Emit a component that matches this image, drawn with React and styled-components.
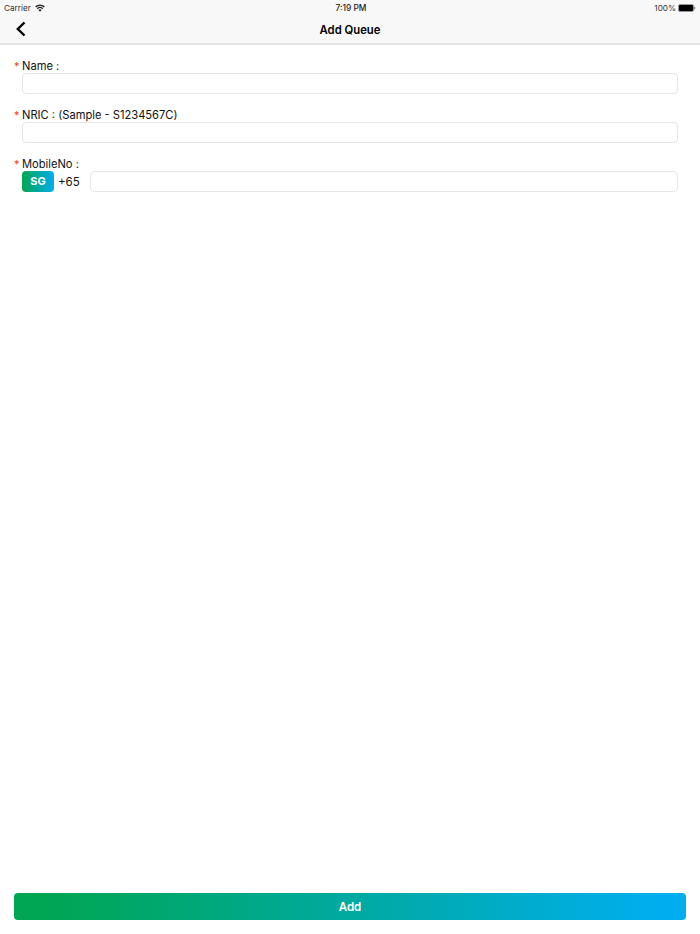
import React from "react";
import styled, { createGlobalStyle } from "styled-components";

const GlobalStyle = createGlobalStyle`
  html, body {
    margin: 0;
    padding: 0;
    background: #ffffff;
    font-family: Inter, "Liberation Sans", Arial, sans-serif;
  }
`;

const Page = styled.div`
  width: 700px;
  height: 934px;
  display: flex;
  flex-direction: column;
  background: #ffffff;
  overflow: hidden;
`;

const Header = styled.header`
  background: #f8f8f8;
  border-bottom: 2px solid #e4e4e4;
  height: 42px;
  flex: none;
  padding-top: 1px;
  display: flex;
  flex-direction: column;
`;

const StatusBar = styled.div`
  height: 13px;
  padding: 0 4px;
  display: grid;
  grid-template-columns: 1fr auto 1fr;
  align-items: center;
  font-size: 8.2px;
  color: #222;
`;

const Carrier = styled.div`
  display: flex;
  align-items: center;
  gap: 4px;
  color: #333;
`;

const Clock = styled.div`
  font-weight: 500;
  font-size: 8.4px;
  padding-left: 2px;
`;

const Battery = styled.div`
  display: flex;
  align-items: center;
  justify-content: flex-end;
  gap: 2px;
  color: #333;
`;

const NavBar = styled.div`
  flex: 1;
  position: relative;
  display: flex;
  align-items: center;
  justify-content: center;
  font-size: 11.3px;
  font-weight: 600;
  color: #000;
  padding-top: 2px;
`;

const BackButton = styled.button`
  position: absolute;
  left: 14px;
  top: 6px;
  width: 14px;
  height: 18px;
  padding: 0;
  border: 0;
  background: none;
  display: block;
`;

const Form = styled.main`
  flex: 1;
  padding: 13px 22px 0 14px;
  display: flex;
  flex-direction: column;
  gap: 13px;
`;

const Field = styled.div`
  display: flex;
  flex-direction: column;
`;

const Label = styled.label`
  height: 15px;
  box-sizing: border-box;
  padding-top: 2px;
  display: flex;
  align-items: center;
  font-size: 11.15px;
  color: #111;
  line-height: 13px;
`;

const Star = styled.span`
  width: 8px;
  color: #f4402c;
  font-size: 11px;
`;

const Input = styled.input`
  flex: 1;
  min-width: 0;
  width: 100%;
  box-sizing: border-box;
  height: 21px;
  margin: 0;
  border: 1px solid #e6e6e6;
  border-radius: 4px;
  background: #fff;
  outline: none;
`;

const InputRow = styled.div`
  display: flex;
  align-items: center;
  padding-left: 8px;
`;

const CountryBadge = styled.div`
  width: 32px;
  height: 21px;
  flex: none;
  border-radius: 4px;
  background: linear-gradient(90deg, #00a651, #00aeef);
  color: #fff;
  font-size: 11px;
  font-weight: 700;
  padding-bottom: 1px;
  box-sizing: border-box;
  display: flex;
  align-items: center;
  justify-content: center;
`;

const DialCode = styled.span`
  width: 36px;
  flex: none;
  padding-left: 4px;
  box-sizing: border-box;
  font-size: 11.5px;
  color: #111;
`;

const Footer = styled.footer`
  flex: none;
  padding: 0 14px 14px;
`;

const AddButton = styled.button`
  width: 100%;
  height: 27px;
  display: block;
  border: 0;
  border-radius: 4px;
  padding: 0;
  background: linear-gradient(90deg, #00a651 4%, #00aeef 96%);
  color: #fff;
  font-family: inherit;
  font-size: 11.5px;
  font-weight: 600;
`;

const WifiIcon = () => (
  <svg width="10" height="8" viewBox="0 0 20 15" fill="#222">
    <path d="M10 15 6.8 11.4a4.8 4.8 0 0 1 6.4 0Z" />
    <path d="M5.4 9.8 3.6 7.8a9.6 9.6 0 0 1 12.8 0l-1.8 2a6.9 6.9 0 0 0-9.2 0Z" />
    <path d="M2.3 6.3.4 4.2a14.4 14.4 0 0 1 19.2 0l-1.9 2.1a11.6 11.6 0 0 0-15.4 0Z" />
  </svg>
);

const BatteryIcon = () => (
  <svg width="18" height="8" viewBox="0 0 18 8">
    <rect x="0.5" y="0.5" width="15" height="7" rx="1.5" fill="#000" stroke="#999" />
    <rect x="16" y="2.5" width="1.2" height="3" rx="0.6" fill="#888" />
  </svg>
);

const BackIcon = () => (
  <svg width="14" height="18" viewBox="0 0 14 18" fill="none">
    <path d="M10.5 2.5 3.8 9l6.7 6.5" stroke="#000" strokeWidth="2.4" />
  </svg>
);

const App = () => {
  return (
    <Page>
      <GlobalStyle />
      <Header>
        <StatusBar>
          <Carrier>
            Carrier
            <WifiIcon />
          </Carrier>
          <Clock>7:19 PM</Clock>
          <Battery>
            100%
            <BatteryIcon />
          </Battery>
        </StatusBar>
        <NavBar>
          <BackButton aria-label="Back">
            <BackIcon />
          </BackButton>
          Add Queue
        </NavBar>
      </Header>
      <Form>
        <Field>
          <Label><Star>*</Star>Name :</Label>
          <InputRow><Input /></InputRow>
        </Field>
        <Field>
          <Label><Star>*</Star>NRIC : (Sample - S1234567C)</Label>
          <InputRow><Input /></InputRow>
        </Field>
        <Field>
          <Label><Star>*</Star>MobileNo :</Label>
          <InputRow>
            <CountryBadge>SG</CountryBadge>
            <DialCode>+65</DialCode>
            <Input />
          </InputRow>
        </Field>
      </Form>
      <Footer>
        <AddButton>Add</AddButton>
      </Footer>
    </Page>
  );
};

export default App;
